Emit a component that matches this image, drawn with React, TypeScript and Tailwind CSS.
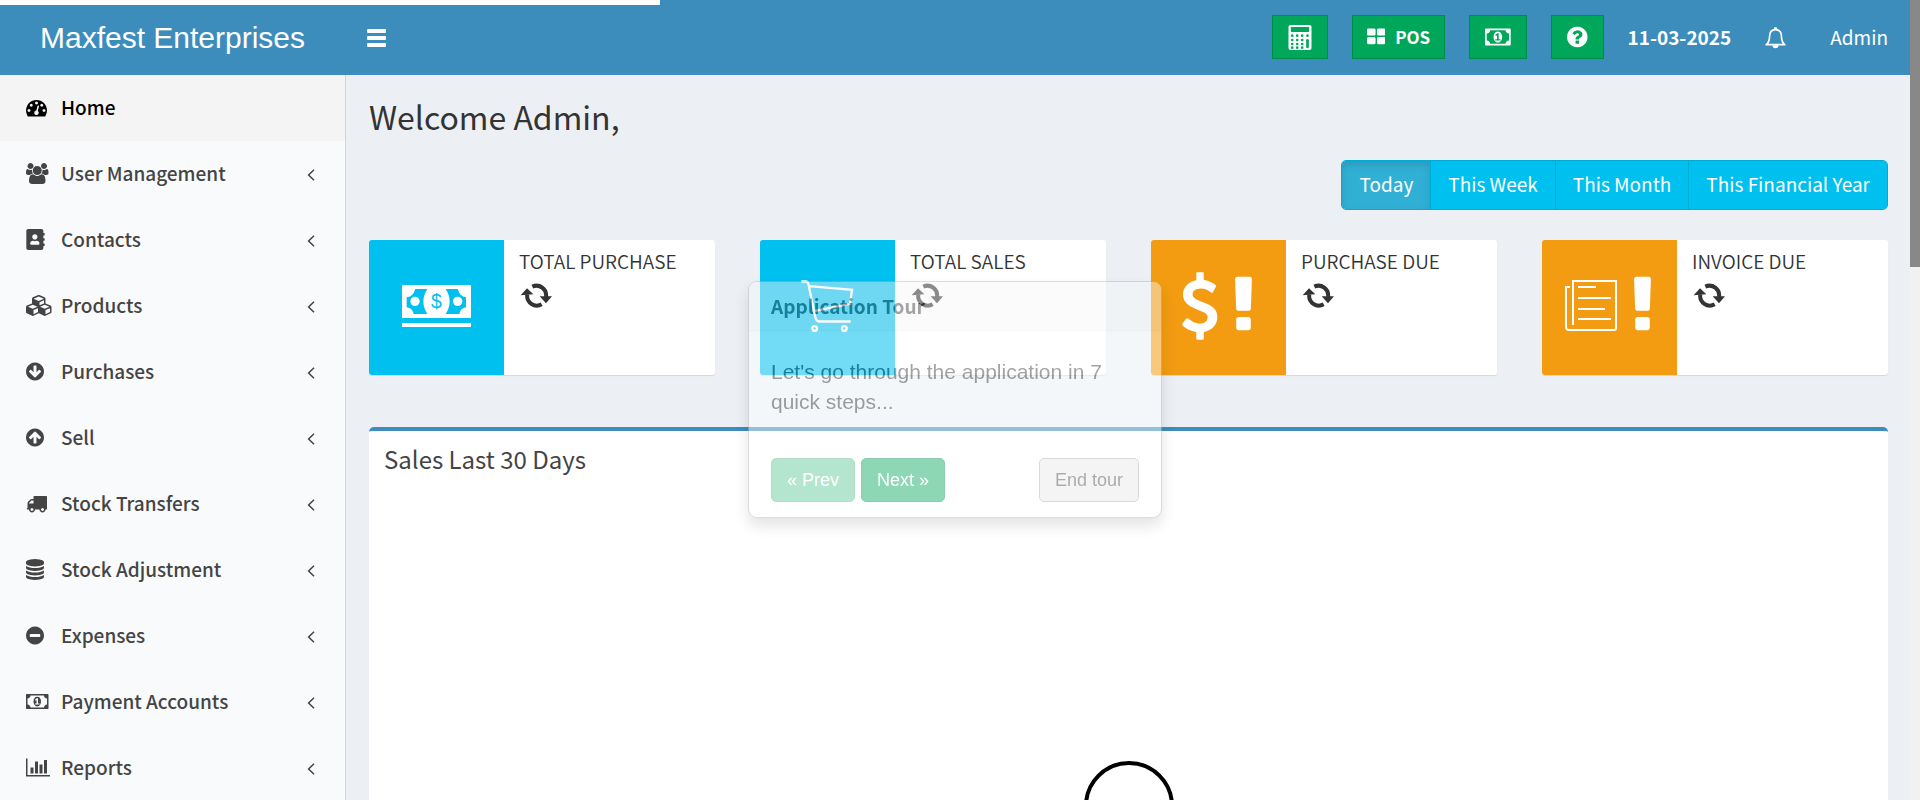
import React from "react";
import { FaAddressBook } from "react-icons/fa";

type GlyphProps = { w: number; d: string; className?: string };

function Glyph({ w, d, className = "" }: GlyphProps) {
  return (
    <svg aria-hidden="true" viewBox={`0 0 ${w} 1792`} className={`shrink-0 fill-current ${className}`}>
      <path d={d} />
    </svg>
  );
}

const tachometer =
  "M384 1152q0-53-37.5-90.5t-90.5-37.5-90.5 37.5-37.5 90.5 37.5 90.5 90.5 37.5 90.5-37.5 37.5-90.5zm192-448q0-53-37.5-90.5t-90.5-37.5-90.5 37.5-37.5 90.5 37.5 90.5 90.5 37.5 90.5-37.5 37.5-90.5zm428 481l101-382q6-26-7.5-48.5t-38.5-29.5-48 6.5-30 39.5l-101 382q-60 5-107 43.5t-63 98.5q-20 77 20 146t117 89 146-20 89-117q16-60-6-117t-72-91zm660-33q0-53-37.5-90.5t-90.5-37.5-90.5 37.5-37.5 90.5 37.5 90.5 90.5 37.5 90.5-37.5 37.5-90.5zm-640-640q0-53-37.5-90.5t-90.5-37.5-90.5 37.5-37.5 90.5 37.5 90.5 90.5 37.5 90.5-37.5 37.5-90.5zm448 192q0-53-37.5-90.5t-90.5-37.5-90.5 37.5-37.5 90.5 37.5 90.5 90.5 37.5 90.5-37.5 37.5-90.5zm320 448q0 261-141 483-19 29-54 29h-1402q-35 0-54-29-141-221-141-483 0-182 71-348t191-286 286-191 348-71 348 71 286 191 191 286 71 348z";
const users =
  "M593 896q-162 5-265 128h-134q-82 0-138-40.5t-56-118.5q0-353 124-353 6 0 43.5 21t97.5 42.5 119 21.5q67 0 133-23-5 37-5 66 0 139 81 256zm1071 637q0 120-73 189.5t-194 69.5h-874q-121 0-194-69.5t-73-189.5q0-53 3.5-103.5t14-109 26.5-108.5 43-97.5 62-81 85.5-53.5 111.5-20q10 0 43 21.5t73 48 107 48 135 21.5 135-21.5 107-48 73-48 43-21.5q61 0 111.5 20t85.5 53.5 62 81 43 97.5 26.5 108.5 14 109 3.5 103.5zm-1024-1277q0 106-75 181t-181 75-181-75-75-181 75-181 181-75 181 75 75 181zm704 384q0 159-112.5 271.5t-271.5 112.5-271.5-112.5-112.5-271.5 112.5-271.5 271.5-112.5 271.5 112.5 112.5 271.5zm576 225q0 78-56 118.5t-138 40.5h-134q-103-123-265-128 81-117 81-256 0-29-5-66 66 23 133 23 59 0 119-21.5t97.5-42.5 43.5-21q124 0 124 353zm-128-609q0 106-75 181t-181 75-181-75-75-181 75-181 181-75 181 75 75 181z";
const cubes =
  "M640 1632l384-192v-314l-384 164v342zm-64-454l404-173-404-173-404 173zm1088 454l384-192v-314l-384 164v342zm-64-454l404-173-404-173-404 173zm-448-293l384-165v-266l-384 164v267zm-64-379l441-189-441-189-441 189zm1088 518v416q0 36-19 67t-52 47l-448 224q-25 14-57 14t-57-14l-448-224q-4-2-7-4-2 2-7 4l-448 224q-25 14-57 14t-57-14l-448-224q-33-16-52-47t-19-67v-416q0-38 21.5-70t56.5-48l434-186v-400q0-38 21.5-70t56.5-48l448-192q23-10 50-10t50 10l448 192q35 16 56.5 48t21.5 70v400l434 186q36 16 57 48t21 70z";
const arrowDown =
  "M1284 897q0-27-18-45l-91-91q-18-18-45-18t-45 18l-189 189v-502q0-26-19-45t-45-19h-128q-26 0-45 19t-19 45v502l-189-189q-19-19-45-19t-45 19l-91 91q-18 18-18 45t18 45l362 362 91 91q18 18 45 18t45-18l91-91 362-362q18-18 18-45zm252-1q0 209-103 385.5t-279.5 279.5-385.5 103-385.5-103-279.5-279.5-103-385.5 103-385.5 279.5-279.5 385.5-103 385.5 103 279.5 279.5 103 385.5z";
const truck =
  "M640 1408q0-52-38-90t-90-38-90 38-38 90 38 90 90 38 90-38 38-90zm-384-512h384v-256h-158q-13 0-22 9l-195 195q-9 9-9 22v30zm1280 512q0-52-38-90t-90-38-90 38-38 90 38 90 90 38 90-38 38-90zm256-1088v1024q0 15-4 26.5t-13.5 18.5-16.5 11.5-23.5 6-22.5 2-25.5 0-22.5-.5q0 106-75 181t-181 75-181-75-75-181h-384q0 106-75 181t-181 75-181-75-75-181h-64q-3 0-22.5.5t-25.5 0-22.5-2-23.5-6-16.5-11.5-13.5-18.5-4-26.5q0-26 19-45t45-19v-320q0-8-.5-35t0-38 2.5-34.5 6.5-37 14-30.5 22.5-30l198-198q19-19 50.5-32t58.5-13h160v-192q0-26 19-45t45-19h1024q26 0 45 19t19 45z";
const database =
  "M768 768q237 0 443-43t325-127v170q0 69-103 128t-280 93.5-385 34.5-385-34.5-280-93.5-103-128v-170q119 84 325 127t443 43zm0 768q237 0 443-43t325-127v170q0 69-103 128t-280 93.5-385 34.5-385-34.5-280-93.5-103-128v-170q119 84 325 127t443 43zm0-384q237 0 443-43t325-127v170q0 69-103 128t-280 93.5-385 34.5-385-34.5-280-93.5-103-128v-170q119 84 325 127t443 43zm0-1152q208 0 385 34.5t280 93.5 103 128v128q0 69-103 128t-280 93.5-385 34.5-385-34.5-280-93.5-103-128v-128q0-69 103-128t280-93.5 385-34.5z";
const minusCircle =
  "M1216 960v-128q0-26-19-45t-45-19h-768q-26 0-45 19t-19 45v128q0 26 19 45t45 19h768q26 0 45-19t19-45zm320-64q0 209-103 385.5t-279.5 279.5-385.5 103-385.5-103-279.5-279.5-103-385.5 103-385.5 279.5-279.5 385.5-103 385.5 103 279.5 279.5 103 385.5z";
const money =
  "M768 1152h384v-96h-128v-448h-114l-148 137 77 80q42-37 55-57h2v288h-128v96zm512-256q0 70-21 142t-59.5 134-101.5 101-138 39-138-39-101.5-101-59.5-134-21-142 21-142 59.5-134 101.5-101 138-39 138 39 101.5 101 59.5 134 21 142zm512 256v-512q-106 0-181-75t-75-181h-1152q0 106-75 181t-181 75v512q106 0 181 75t75 181h1152q0-106 75-181t181-75zm128-832v1152q0 26-19 45t-45 19h-1792q-26 0-45-19t-19-45v-1152q0-26 19-45t45-19h1792q26 0 45 19t19 45z";
const barChart =
  "M640 896v512h-256v-512h256zm384-512v1024h-256v-1024h256zm1024 1152v128h-2048v-1536h128v1408h1920zm-640-896v768h-256v-768h256zm384-384v1152h-256v-1152h256z";
const question =
  "M896 1376v-192q0-14-9-23t-23-9h-192q-14 0-23 9t-9 23v192q0 14 9 23t23 9h192q14 0 23-9t9-23zm256-672q0-88-55.5-163t-138.5-116-170-41q-243 0-371 213-15 24 8 42l132 100q7 6 19 6 16 0 25-12 53-68 86-92 34-24 86-24 48 0 85.5 26t37.5 59q0 38-20 61t-68 45q-63 28-115.5 86.5t-52.5 125.5v36q0 14 9 23t23 9h192q14 0 23-9t9-23q0-19 21.5-49.5t54.5-49.5q32-18 49-28.5t46-35 44.5-48 28-60.5 12.5-81zm384 192q0 209-103 385.5t-279.5 279.5-385.5 103-385.5-103-279.5-279.5-103-385.5 103-385.5 279.5-279.5 385.5-103 385.5 103 279.5 279.5 103 385.5z";
const thLarge =
  "M768 1024v384q0 52-38 90t-90 38h-512q-52 0-90-38t-38-90v-384q0-52 38-90t90-38h512q52 0 90 38t38 90zm0-768v384q0 52-38 90t-90 38h-512q-52 0-90-38t-38-90v-384q0-52 38-90t90-38h512q52 0 90 38t38 90zm896 768v384q0 52-38 90t-90 38h-512q-52 0-90-38t-38-90v-384q0-52 38-90t90-38h512q52 0 90 38t38 90zm0-768v384q0 52-38 90t-90 38h-512q-52 0-90-38t-38-90v-384q0-52 38-90t90-38h512q52 0 90 38t38 90z";
const dollar =
  "M1362 1185q0 153-99.5 263.5t-258.5 136.5v175q0 14-9 23t-23 9h-135q-13 0-22.5-9.5t-9.5-22.5v-175q-66-9-127.5-31t-101.5-44.5-74-48-46.5-37.5-17.5-18q-17-21-2-41l103-135q7-10 23-12 15-2 24 9l2 2q113 99 243 125 37 8 74 8 81 0 142.5-43t61.5-122q0-28-15-53t-33.5-42-58.5-37.5-66-32-80-32.5q-39-16-61.5-25t-61.5-26.5-62.5-31-56.5-35.5-53.5-42.5-43.5-49-35.5-58-21-66.5-8.5-78q0-138 98-242t255-134v-180q0-13 9.5-22.5t22.5-9.5h135q14 0 23 9t9 23v176q57 6 110.5 23t87 33.5 63.5 37.5 39 29 15 14q17 18 5 38l-81 146q-8 15-23 16-14 3-27-7-3-3-14.5-12t-39-26.5-58.5-32-74.5-26-85.5-11.5q-95 0-155 43t-60 111q0 26 8.5 48t29.5 41.5 39.5 33 56 31 60.5 27 70 27.5q53 20 81 31.5t76 35 75.5 42.5 62 50 53 63.5 31.5 76.5 13 94z";
const exclamation =
  "M1152 1248v224q0 26-19 45t-45 19h-256q-26 0-45-19t-19-45v-224q0-26 19-45t45-19h256q26 0 45 19t19 45zm30-1056l-28 768q-1 26-20.5 45t-45.5 19h-256q-26 0-45.5-19t-20.5-45l-28-768q-1-26 17.5-45t44.5-19h320q26 0 44.5 19t17.5 45z";

function Exclamation() {
  return (
    <svg aria-hidden="true" viewBox="736 0 448 1792" className="h-[68px] w-[17px] fill-current">
      <path d={exclamation} />
    </svg>
  );
}

function CashIcon() {
  return (
    <svg aria-hidden="true" viewBox="126 195 207 126" className="h-[42px] w-[69px]">
      <path fill="#fff" d="M126 195h207v99H126zM126 309h207v12H126z" />
      <path fill="#00c0ef" d="M166 207H202Q178 244 202 282H161Q158 264 140 262V232Q158 232 166 207zM293 207H257Q281 244 257 282H298Q301 264 318 262V232Q301 232 293 207z" />
      <circle cx="165" cy="244" r="14" fill="#fff" />
      <circle cx="293" cy="244" r="14" fill="#fff" />
      <text x="229" y="264" textAnchor="middle" fill="#00c0ef" className="font-['Liberation_Sans'] text-[58px] font-medium">$</text>
    </svg>
  );
}

function CartIcon() {
  return (
    <svg aria-hidden="true" viewBox="183 179 159 155" className="h-[52px] w-[53px] fill-none stroke-white stroke-[7]">
      <path d="M184 183H197Q203 183 205 190L226 290Q229 303 240 303H332M207 197L336 208L330 250L222 272" />
      <circle cx="224" cy="324" r="7" />
      <circle cx="313" cy="324" r="7" />
    </svg>
  );
}

function InvoiceIcon() {
  return (
    <svg aria-hidden="true" viewBox="0 0 53 52" className="h-[52px] w-[53px] fill-none stroke-white stroke-2">
      <path d="M8 45V1H51V48Q51 50 49 50H4Q1 50 1 47V7H5M13 7H31M13 18H46M13 29H40M13 39H46" />
    </svg>
  );
}

function RefreshIcon() {
  return (
    <svg aria-hidden="true" viewBox="27 26 99 75" className="mt-[7px] h-[25px] w-[33px]">
      <path fill="none" stroke="#333" strokeWidth="12" d="M67 37A29 29 0 0 1 108 68M95 90A29 29 0 0 1 52 60" />
      <path fill="#333" d="M89 66H126L108 87zM32 63L51 42L70 60z" />
    </svg>
  );
}

function CalculatorIcon() {
  return (
    <svg aria-hidden="true" viewBox="69 45 69 75" className="h-[25px] w-6">
      <rect x="69" y="45" width="69" height="75" rx="6" fill="#fff" />
      <g fill="#00a65a">
        <rect x="76" y="51" width="55" height="15" rx="2" />
        {[77, 90, 102, 113].map((y) =>
          [80, 95, 110].map((x) => <circle key={`${x}-${y}`} cx={x} cy={y} r="4" />),
        )}
        <circle cx="126" cy="77" r="4" />
        <rect x="122" y="87" width="8" height="28" rx="4" />
      </g>
    </svg>
  );
}

function BellIcon() {
  return (
    <svg aria-hidden="true" viewBox="74 50 62 66" className="h-[22px] w-[21px]">
      <path
        fill="none"
        stroke="#fff"
        strokeWidth="5"
        strokeLinejoin="round"
        d="M105 58C92 58 87 68 87 80C87 92 83 98 77 103H133C127 98 123 92 123 80C123 68 118 58 105 58z"
      />
      <path fill="#fff" d="M101 51h8v7h-8zM96 105h18a9 9 0 0 1-18 0z" />
    </svg>
  );
}

const menu = [
  { label: "Home", icon: <Glyph w={1792} d={tachometer} className="h-[21px]" /> },
  { label: "User Management", icon: <Glyph w={1920} d={users} className="h-[21px]" /> },
  { label: "Contacts", icon: <FaAddressBook aria-hidden="true" className="h-[21px] w-[19px]" /> },
  { label: "Products", icon: <Glyph w={2304} d={cubes} className="h-[21px]" /> },
  { label: "Purchases", icon: <Glyph w={1536} d={arrowDown} className="h-[21px]" /> },
  { label: "Sell", icon: <Glyph w={1536} d={arrowDown} className="h-[21px] rotate-180" /> },
  { label: "Stock Transfers", icon: <Glyph w={1792} d={truck} className="h-[21px]" /> },
  { label: "Stock Adjustment", icon: <Glyph w={1536} d={database} className="h-[21px]" /> },
  { label: "Expenses", icon: <Glyph w={1536} d={minusCircle} className="h-[21px]" /> },
  { label: "Payment Accounts", icon: <Glyph w={1920} d={money} className="h-[21px]" /> },
  { label: "Reports", icon: <Glyph w={2048} d={barChart} className="h-[21px]" /> },
];

const stats = [
  { label: "Total Purchase", color: "bg-[#00c0ef]", icon: <CashIcon /> },
  { label: "Total Sales", color: "bg-[#00c0ef]", icon: <CartIcon /> },
  {
    label: "Purchase Due",
    color: "bg-[#f39c12]",
    icon: (
      <div className="flex items-center gap-[17px] pr-1">
        <svg aria-hidden="true" viewBox="400 0 980 1792" className="h-[68px] w-[37px] fill-current">
          <path d={dollar} />
        </svg>
        <Exclamation />
      </div>
    ),
  },
  {
    label: "Invoice Due",
    color: "bg-[#f39c12]",
    icon: (
      <div className="flex items-center gap-4 pr-1">
        <InvoiceIcon />
        <Exclamation />
      </div>
    ),
  },
];

const ranges = ["Today", "This Week", "This Month", "This Financial Year"];

const navButton = "flex h-11 items-center justify-center border border-[#008d4c] bg-[#00a65a] text-white";

function Header() {
  return (
    <header className="flex h-[75px] shrink-0 items-center bg-[#3c8dbc] text-white">
      <a href="#" className="w-[345px] shrink-0 text-center font-['Liberation_Sans',sans-serif] text-[30px] leading-[75px]">
        Maxfest Enterprises
      </a>
      <button type="button" aria-label="Toggle navigation" className="ml-[22px] flex w-[19px] flex-col gap-[3px]">
        <span className="h-[4px] rounded-[1px] bg-white" />
        <span className="h-[4px] rounded-[1px] bg-white" />
        <span className="h-[4px] rounded-[1px] bg-white" />
      </button>
      <div className="ml-auto flex items-center pr-[22px]">
        <div className="flex gap-6 pb-px">
          <button type="button" aria-label="Calculator" className={`${navButton} px-[15px]`}>
            <CalculatorIcon />
          </button>
          <a href="#" className={`${navButton} gap-[10px] px-[14px] text-[17px] font-bold`}>
            <Glyph w={1664} d={thLarge} className="h-5" />
            POS
          </a>
          <button type="button" aria-label="Register profit" className={`${navButton} px-[15px]`}>
            <Glyph w={1920} d={money} className="h-6" />
          </button>
          <button type="button" aria-label="Help" className={`${navButton} px-[15px]`}>
            <Glyph w={1536} d={question} className="h-6" />
          </button>
        </div>
        <span className="ml-6 text-[19px] font-bold">11-03-2025</span>
        <button type="button" aria-label="Notifications" className="ml-[34px]">
          <BellIcon />
        </button>
        <a href="#" className="ml-11 text-[19px]">Admin</a>
      </div>
    </header>
  );
}

function Sidebar() {
  return (
    <nav aria-label="Main" className="w-[346px] shrink-0 border-r border-[#d2d6de] bg-[#f9fafc]">
      <ul>
        {menu.map((item, i) => (
          <li key={item.label}>
            <a
              href="#"
              className={`flex h-[66px] items-center pr-[30px] pb-[2px] pl-[26px] text-[19px] font-medium ${
                i === 0 ? "bg-[#f4f4f5] text-black" : "text-[#444]"
              }`}
            >
              <span className="flex w-[35px] shrink-0">{item.icon}</span>
              <span className="grow">{item.label}</span>
              {i > 0 && (
                <svg aria-hidden="true" viewBox="0 0 8 12" className="mt-1 h-3 w-2 fill-none stroke-current stroke-[1.5]">
                  <path d="M7 0.8L1.6 6L7 11.2" />
                </svg>
              )}
            </a>
          </li>
        ))}
      </ul>
    </nav>
  );
}

function TourPopover() {
  return (
    <div
      role="dialog"
      aria-label="Application Tour"
      className="absolute top-[281px] left-1/2 w-[414px] -translate-x-1/2 rounded-[9px] border border-black/30 bg-white opacity-45 shadow-[0_8px_15px_rgba(0,0,0,0.25)]"
    >
      <h3 className="rounded-t-[8px] border-b border-[#ebebeb] bg-[#f7f7f7] px-[22px] text-[19px] leading-[48px] font-bold text-[#333]">
        Application Tour
      </h3>
      <p className="px-[22px] pt-[26px] font-['Liberation_Sans',sans-serif] text-[21px] leading-[30px] text-[#333]">
        Let's go through the application in 7 quick steps...
      </p>
      <div className="flex gap-[6px] px-[22px] pt-[41px] pb-[15px] font-['Liberation_Sans',sans-serif] text-[18px] leading-[42px]">
        <button type="button" disabled className="rounded-[5px] border border-[#008d4c] bg-[#00a65a] px-[15px] text-white opacity-65">
          « Prev
        </button>
        <button type="button" className="rounded-[5px] border border-[#008d4c] bg-[#00a65a] px-[15px] text-white">
          Next »
        </button>
        <button type="button" className="ml-auto rounded-[5px] border border-[#aaa] bg-[#e7e7e7] px-[15px] text-[#444]">
          End tour
        </button>
      </div>
    </div>
  );
}

export default function App() {
  return (
    <div className="flex h-screen overflow-hidden font-['Noto_Sans_CJK_SC',sans-serif] text-[#333]">
      <div className="relative flex min-w-0 grow flex-col">
        <div className="absolute top-0 left-0 h-[5px] w-[660px] bg-white" role="progressbar" aria-label="Page loading" />
        <Header />
        <div className="flex min-h-0 grow">
          <Sidebar />
          <main className="flex min-w-0 grow flex-col bg-[#ecf0f5] pr-[22px] pl-[23px]">
            <h1 className="pt-[21px] text-[32px] leading-[40px]">Welcome Admin,</h1>
            <div className="mt-6 flex justify-end">
              <div role="group" aria-label="Period" className="flex overflow-hidden rounded-[5px] border border-[#00acd6] text-[19px] leading-[46px] text-white">
                {ranges.map((range, i) => (
                  <button
                    key={range}
                    type="button"
                    aria-pressed={i === 0}
                    className={
                      i === 0
                        ? "bg-[#31b0d5] px-[17px] pb-[2px] shadow-[inset_0_4px_8px_rgba(0,0,0,0.125)]"
                        : "border-l border-[#00acd6] bg-[#00c0ef] px-[17px] pb-[2px]"
                    }
                  >
                    {range}
                  </button>
                ))}
              </div>
            </div>
            <div className="mt-[30px] grid grid-cols-4 gap-[45px]">
              {stats.map((stat) => (
                <section key={stat.label} className="flex h-[135px] rounded-[3px] bg-white shadow-[0_1px_1px_rgba(0,0,0,0.1)]">
                  <div className={`flex w-[135px] shrink-0 items-center justify-center rounded-l-[3px] pb-1 text-white ${stat.color}`}>
                    {stat.icon}
                  </div>
                  <div className="px-[15px] pt-[6px]">
                    <h2 className="text-[19px] leading-[30px] font-[350] uppercase">{stat.label}</h2>
                    <RefreshIcon />
                  </div>
                </section>
              ))}
            </div>
            <section className="mt-[52px] grow rounded-t-[5px] border-t-4 border-[#3c8dbc] bg-white px-[15px] pt-[14px]">
              <h2 className="text-[24px] leading-[28px] text-[#444]">Sales Last 30 Days</h2>
              <svg aria-label="Loading chart" role="img" viewBox="0 0 92 92" className="mx-auto mt-[287px] size-[92px] fill-none stroke-black stroke-4">
                <circle cx="46" cy="46" r="43" />
              </svg>
            </section>
          </main>
        </div>
        <TourPopover />
      </div>
      <div aria-hidden="true" className="w-[10px] shrink-0 bg-[#f1f1f1]">
        <div className="h-1/3 bg-[#888]" />
      </div>
    </div>
  );
}
